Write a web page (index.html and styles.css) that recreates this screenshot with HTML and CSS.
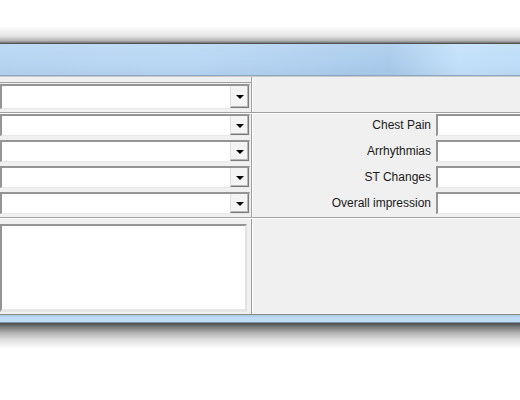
FILE: index.html
```html
<!DOCTYPE html>
<html>
<head>
<meta charset="utf-8">
<link rel="stylesheet" href="styles.css">
</head>
<body>
<div class="top-shadow"></div>
<div class="window">
  <div class="titlebar"></div>
  <div class="client">
    <div class="section sec-first">
      <div class="left">
        <div class="frame">
          <div class="combo"><div class="field"></div><div class="btn"><span class="arrow"></span></div></div>
        </div>
      </div>
      <div class="right"></div>
    </div>
    <div class="section sec-rows">
      <div class="left stack">
        <div class="combo"><div class="field"></div><div class="btn"><span class="arrow"></span></div></div>
        <div class="combo"><div class="field"></div><div class="btn"><span class="arrow"></span></div></div>
        <div class="combo"><div class="field"></div><div class="btn"><span class="arrow"></span></div></div>
        <div class="combo"><div class="field"></div><div class="btn"><span class="arrow"></span></div></div>
      </div>
      <div class="right stack">
        <div class="frow"><span class="label">Chest Pain</span><div class="input"></div></div>
        <div class="frow"><span class="label">Arrhythmias</span><div class="input"></div></div>
        <div class="frow"><span class="label">ST Changes</span><div class="input"></div></div>
        <div class="frow"><span class="label">Overall impression</span><div class="input"></div></div>
      </div>
    </div>
    <div class="section sec-memo">
      <div class="left"><div class="memo"></div></div>
      <div class="right"></div>
    </div>
  </div>
  <div class="bottom-frame"></div>
</div>
<div class="bottom-shadow"></div>
</body>
</html>
```
FILE: styles.css
```css
html, body {
  margin: 0;
  padding: 0;
  background: #ffffff;
  overflow: hidden;
  width: 520px;
  height: 400px;
}
body {
  font-family: "Liberation Sans", Arial, sans-serif;
  font-size: 12px;
  color: #1a1a1a;
}
.top-shadow {
  height: 44px;
  background: linear-gradient(to bottom, #ffffff 0px, #ffffff 26px, #e4e4e4 36px, #b0b0b0 41px, #6a6a6a 43px, #3c3c3c 44px);
}
.window {
  width: 540px;
}
.titlebar {
  height: 31px;
  background:
    linear-gradient(to bottom, rgba(255,255,255,0.10), rgba(255,255,255,0) 60%, rgba(0,0,0,0.03)),
    linear-gradient(to right, #b6d4f1 0%, #b9d8f4 35%, #b1d1f0 55%, #a9cbeb 72%, #c3e1fa 85%, #bcdcf7 100%);
  border-bottom: 1px solid #8ea6bf;
}
.client {
  background: #f0f0f0;
  border-top: 1px solid #c9c9c9;
  border-bottom: 1px solid #8a8a8a;
  height: 237px;
  display: flex;
  flex-direction: column;
}
.section {
  display: grid;
  grid-template-columns: 252px 1fr;
}
.section .left {
  border-right: 1px solid #a0a0a0;
  box-shadow: 1px 0 0 #ffffff;
}
.sec-first {
  height: 35px;
  border-bottom: 1px solid #a0a0a0;
}
.sec-first .left {
  padding-top: 5px;
}
.frame {
  border-top: 1px solid #a0a0a0;
  border-right: 1px solid #a0a0a0;
  width: 250px;
  padding: 1px 1px 0 0;
}
.sec-first .combo {
  height: 25px;
}
.sec-rows {
  height: 103px;
  border-top: 1px solid #ffffff;
  border-bottom: 1px solid #a0a0a0;
}
.stack {
  display: flex;
  flex-direction: column;
  gap: 4px;
}
.sec-rows .left .combo {
  width: 250px;
}
.combo {
  height: 22px;
  box-sizing: border-box;
  display: flex;
  background: #ffffff;
  border-top: 2px solid #949494;
  border-left: 2px solid #949494;
  border-right: 1px solid #e8e8e8;
  border-bottom: 1px solid #e8e8e8;
}
.combo .field {
  flex: 1;
}
.combo .btn {
  width: 17px;
  background: #f4f4f4;
  border-left: 1px solid #e0e0e0;
  border-right: 1px solid #7a7a7a;
  border-bottom: 1px solid #7a7a7a;
  box-shadow: inset -1px -1px 0 #b8b8b8;
  display: flex;
  align-items: center;
  justify-content: center;
}
.arrow {
  width: 0;
  height: 0;
  border-left: 4px solid transparent;
  border-right: 4px solid transparent;
  border-top: 4px solid #000;
  margin-top: 1px;
}
.frow {
  height: 22px;
  display: flex;
  align-items: center;
}
.label {
  width: 179px;
  text-align: right;
  margin-right: 5px;
  white-space: nowrap;
}
.input {
  width: 110px;
  height: 22px;
  box-sizing: border-box;
  background: #ffffff;
  border-top: 2px solid #949494;
  border-left: 2px solid #949494;
  border-bottom: 1px solid #e8e8e8;
}
.sec-memo {
  flex: 1;
  border-top: 1px solid #ffffff;
}
.sec-memo .left {
  padding-top: 5px;
}
.memo {
  width: 247px;
  height: 88px;
  box-sizing: border-box;
  background: #ffffff;
  border-top: 2px solid #949494;
  border-left: 2px solid #949494;
  border-right: 2px solid #e4e4e4;
  border-bottom: 3px solid #e6e6e6;
}
.bottom-frame {
  height: 7px;
  background: linear-gradient(to bottom, #a9c8e6, #bddbf5 40%, #c0ddf6);
  border-bottom: 1px solid #7d92a8;
}
.bottom-shadow {
  height: 26px;
  background: linear-gradient(to bottom, #4a4a4a 0px, #7a7a7a 4px, #b4b4b4 10px, #e0e0e0 17px, #ffffff 26px);
}
```
